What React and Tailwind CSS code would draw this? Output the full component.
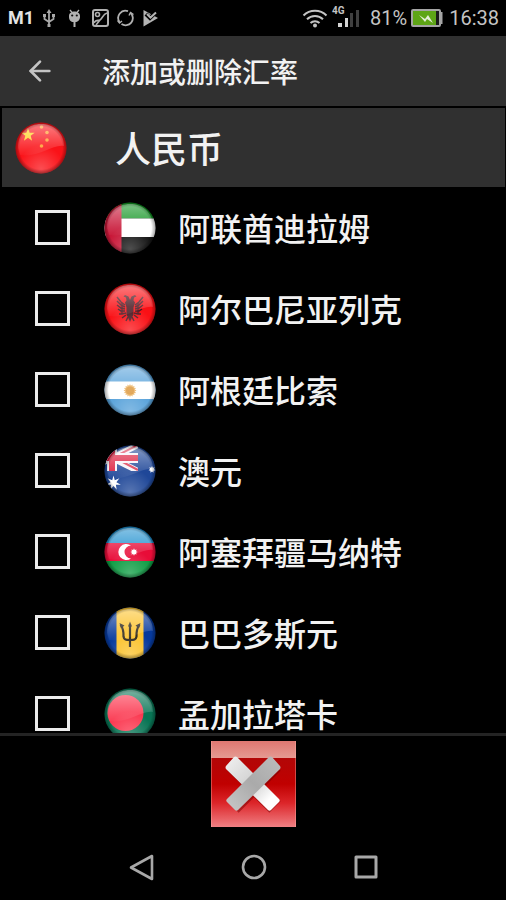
import { ArrowLeft } from 'lucide-react';
import { useId, useState } from 'react';

const CURRENCIES = [
  { code: 'AED', name: '阿联酋迪拉姆' },
  { code: 'ALL', name: '阿尔巴尼亚列克' },
  { code: 'ARS', name: '阿根廷比索' },
  { code: 'AUD', name: '澳元' },
  { code: 'AZN', name: '阿塞拜疆马纳特' },
  { code: 'BBD', name: '巴巴多斯元' },
  { code: 'BDT', name: '孟加拉塔卡' },
];

function starPoints(cx, cy, outer, inner, count) {
  const points = [];
  for (let i = 0; i < count * 2; i += 1) {
    const r = i % 2 === 0 ? outer : inner;
    const angle = (Math.PI * i) / count - Math.PI / 2;
    points.push(`${(cx + r * Math.cos(angle)).toFixed(2)},${(cy + r * Math.sin(angle)).toFixed(2)}`);
  }
  return points.join(' ');
}

// Flag artwork, drawn on a 52 x 52 square and clipped to a ball
const FLAGS = {
  CNY: (
    <>
      <rect width="52" height="52" fill="#fa1218" />
      <polygon points={starPoints(13, 13, 7, 2.8, 5)} fill="#ffd21f" />
      <circle cx="26.500" cy="5" r="1.800" fill="#ff9a2a" />
      <circle cx="32" cy="10.500" r="1.800" fill="#ff9a2a" />
      <circle cx="32" cy="18" r="1.800" fill="#ff9a2a" />
      <circle cx="26.500" cy="24" r="1.800" fill="#ff9a2a" />
    </>
  ),
  AED: (
    <>
      <rect width="52" height="16.500" fill="#0f9420" />
      <rect y="16.500" width="52" height="18.500" fill="#ffffff" />
      <rect y="35" width="52" height="17" fill="#141414" />
      <rect width="17.500" height="52" fill="#c81637" />
    </>
  ),
  ALL: (
    <>
      <rect width="52" height="52" fill="#fa1015" />
      <g fill="#4a1a22">
        <path d="M26 17l-1.500-3.500-3.500-1.500-1.500 1.500 2.500 1 .500 3-1.500 2 1.500 5v7l1.500 3L26 39l2-4.500 1.500-3v-7l1.500-5-1.500-2 .500-3 2.500-1-1.500-1.500-3.500 1.500z" />
      </g>
      <g fill="none" stroke="#4a1a22" strokeWidth="1.500">
        <path d="M21 22l-4-3-4-5M21 24l-4-2-4-4M21 26l-4-1-4-3M21 28l-4 0-3-2M22 30l-4 1-3 0M22 32l-4 3M24 34l-2 4" />
        <path d="M31 22l4-3 4-5M31 24l4-2 4-4M31 26l4-1 4-3M31 28l4 0 3-2M30 30l4 1 3 0M30 32l4 3M28 34l2 4" />
      </g>
      <path d="M18 20v11M34 20v11" stroke="#4a1a22" strokeWidth="2.500" strokeOpacity="0.700" />
    </>
  ),
  ARS: (
    <>
      <rect width="52" height="52" fill="#58a2da" />
      <rect y="17.500" width="52" height="17.500" fill="#ffffff" />
      <polygon points={starPoints(26, 26.5, 6.5, 4.8, 16)} fill="#ecb568" />
      <circle cx="26" cy="26.500" r="4" fill="#dd9a42" />
    </>
  ),
  AUD: (
    <>
      <rect width="52" height="52" fill="#1f4798" />
      <svg width="34" height="26" viewBox="0 0 34 26">
        <path d="M8 13 36-1M8 13l28 14M8 13-6 6M8 13-6 20" stroke="#f6f2f8" strokeWidth="6" />
        <path d="M8 13 34 0M12 13.500l22 11.500" stroke="#dc3650" strokeWidth="2" />
        <path d="M8 0v26M0 13h34" stroke="#f6f2f8" strokeWidth="10" />
        <path d="M8 0v26M0 13h34" stroke="#dc1c3c" strokeWidth="6" />
      </svg>
      <polygon points={starPoints(9.5, 38, 7.5, 3, 7)} fill="#ffffff" />
      <polygon points={starPoints(48, 24.5, 3.5, 2, 7)} fill="#ffffff" />
    </>
  ),
  AZN: (
    <>
      <rect width="52" height="17" fill="#2090cf" />
      <rect y="17" width="52" height="18" fill="#e80c38" />
      <rect y="35" width="52" height="17" fill="#0c9c42" />
      <path d="M27 19.500a8 8 0 1 0 0 13 6.500 6.500 0 1 1 0-13z" fill="#ffffff" />
      <polygon points={starPoints(30, 26, 3.7, 2.2, 8)} fill="#ffffff" />
    </>
  ),
  BBD: (
    <>
      <rect width="52" height="52" fill="#06399c" />
      <rect x="12.500" width="27" height="52" fill="#fcc22a" />
      <path
        d="M26 17v23M26 33c-4 0-6 0-6.500-3.500.300-5-1-9-3-12M26 33c4 0 6 0 6.500-3.500-.300-5 1-9 3-12"
        fill="none"
        stroke="#2a2318"
        strokeWidth="2.200"
      />
      <path d="m26 14.500 2 5h-4zM15.500 16l5 2.500-3.500 3zM36.500 16l-5 2.500 3.500 3z" fill="#2a2318" />
    </>
  ),
  BDT: (
    <>
      <rect width="52" height="52" fill="#087454" />
      <circle cx="21.500" cy="25" r="18" fill="#fb3850" />
    </>
  ),
};

function FlagBall({ code }) {
  const id = useId();

  return (
    <svg viewBox="0 0 52 52" className="h-[52px] w-[52px] shrink-0" aria-hidden="true">
      <defs>
        <clipPath id={`${id}-clip`}>
          <circle cx="26" cy="26" r="25.500" />
        </clipPath>
        <radialGradient id={`${id}-edge`}>
          <stop offset="0.820" stopColor="#000" stopOpacity="0" />
          <stop offset="1" stopColor="#000" stopOpacity="0.400" />
        </radialGradient>
        <linearGradient id={`${id}-shine`} x1="0" y1="0" x2="0" y2="1">
          <stop offset="0" stopColor="#fff" stopOpacity="0.450" />
          <stop offset="0.700" stopColor="#fff" stopOpacity="0.150" />
          <stop offset="1" stopColor="#fff" stopOpacity="0.030" />
        </linearGradient>
        <radialGradient id={`${id}-glow`} cx="0.5" cy="0.9" r="0.45">
          <stop offset="0" stopColor="#fff" stopOpacity="0.250" />
          <stop offset="1" stopColor="#fff" stopOpacity="0" />
        </radialGradient>
      </defs>
      <g clipPath={`url(#${id}-clip)`}>
        {FLAGS[code]}
        <path d="M3 26C3 10 14 2 26 2s23 8 23 22C37 22 25 36 5 33z" fill={`url(#${id}-shine)`} />
        <rect width="52" height="52" fill={`url(#${id}-glow)`} />
        <rect width="52" height="52" fill={`url(#${id}-edge)`} />
      </g>
    </svg>
  );
}

function StatusBar() {
  return (
    <div className="flex h-9 shrink-0 items-center justify-between pr-[7px] pl-2 font-[Roboto,sans-serif] text-xl text-[#c4c4c4]">
      <div className="flex items-center gap-2">
        <span className="text-lg font-bold text-[#e4e4e4]">M1</span>
        <svg viewBox="0 0 17 18" className="h-[18px] w-[17px]" fill="none" stroke="#a8a8a8" strokeWidth="1.8" aria-hidden="true">
          <path d="M7 2v15M2.500 6v4L7 13M11.500 6v4L7 13" />
          <path d="m7 0 2.500 4h-5zM1 5h3v3H1zM10 5h3v3h-3zM5.500 15h3v3h-3z" fill="#a8a8a8" stroke="none" />
        </svg>
        <svg viewBox="0 0 17 18" className="h-[18px] w-[17px]" fill="#b4b4b4" aria-hidden="true">
          <path d="m3 1 2.500 3M12 1 9.500 4" stroke="#b4b4b4" strokeWidth="1.300" />
          <path d="M2 7c0-6 11-6 11 0v1c0 3-2.500 5-4.500 5v5h-2v-5C4 13 2 11 2 8z" />
          <circle cx="5.200" cy="6.500" r="1.100" fill="#111" />
          <circle cx="9.800" cy="6.500" r="1.100" fill="#111" />
        </svg>
        <svg viewBox="0 0 17 18" className="h-[18px] w-[17px]" fill="none" stroke="#b0b0b0" strokeWidth="1.6" aria-hidden="true">
          <rect x="1" y="1" width="15" height="16" rx="2" strokeWidth="2" />
          <circle cx="5.500" cy="5.500" r="2" />
          <path d="M2 14c2-4 4-2 6-3s3-6 7-7M4 16l4-5" />
        </svg>
        <svg viewBox="0 0 17 18" className="h-[18px] w-[17px]" fill="none" stroke="#b0b0b0" strokeWidth="1.8" aria-hidden="true">
          <path d="M2.500 13A7.200 7.200 0 0 1 11 2.200M13.500 3.800a7.200 7.200 0 0 1-9 11.200" />
          <path d="M.500 11.500l2 2.500 2.500-2M16.500 5.500 13.500 3.500l-1.500 3" strokeWidth="1.400" />
        </svg>
        <svg viewBox="0 0 17 18" className="h-[18px] w-[17px]" aria-hidden="true">
          <path d="M1.500 1 16 9 1.500 17.500z" fill="#b4b4b4" />
          <path d="m4 5 4 4 7-7" stroke="#000" strokeWidth="4" fill="none" />
          <path d="m5 5 3.500 3.500L14 3.500" stroke="#b4b4b4" strokeWidth="2" fill="none" />
        </svg>
      </div>

      <div className="flex items-center">
        <svg viewBox="0 0 26 20" className="h-5 w-[26px]" fill="none" stroke="#c4c4c4" strokeWidth="2" aria-hidden="true">
          <path d="M1.500 7.500a16.500 16.500 0 0 1 23 0M5 11.300a11.500 11.500 0 0 1 16 0M8.500 15a6.600 6.600 0 0 1 9 0" />
          <circle cx="13" cy="17.500" r="2" fill="#c4c4c4" stroke="none" />
        </svg>
        <div className="relative ml-1 h-6 w-7">
          <span className="absolute top-0 left-0 text-[10px] leading-[10px] font-bold">4G</span>
          <svg viewBox="0 0 28 24" className="h-6 w-7" aria-hidden="true">
            <path d="M6 17h4v4H6zM13 12h3v9h-3z" fill="#d4d4d4" />
            <path d="M18 7h3v14h-3zM24 4h3v17h-3z" fill="#404040" />
          </svg>
        </div>
        <span className="ml-[10px]">81%</span>
        <svg viewBox="0 0 32 18" className="ml-1 h-[18px] w-8" aria-hidden="true">
          <rect x="1" y="1" width="28" height="16" rx="1" fill="#1c1c1c" stroke="#a5a5a5" strokeWidth="2" />
          <rect x="2" y="2" width="23" height="14" fill="#5ea516" />
          <path d="M29 3h2.500v12H29z" fill="#a5a5a5" />
          <path d="m8 6 6 4 3-4 5 8-6-4-2 3z" fill="#e4eed8" />
        </svg>
        <span className="ml-[6px]">16:38</span>
      </div>
    </div>
  );
}

function CloseIcon() {
  return (
    <svg viewBox="0 0 85 86" className="h-[86px] w-[85px]" aria-hidden="true">
      <defs>
        <linearGradient id="close-top" x1="0" y1="0" x2="0" y2="1">
          <stop offset="0" stopColor="#df7771" />
          <stop offset="1" stopColor="#e59a92" />
        </linearGradient>
        <linearGradient id="close-base" x1="0" y1="0" x2="0" y2="1">
          <stop offset="0" stopColor="#a90b0b" />
          <stop offset="0.500" stopColor="#c00000" />
          <stop offset="0.720" stopColor="#dc2529" />
          <stop offset="1" stopColor="#f08084" />
        </linearGradient>
        <linearGradient id="close-light" x1="0" y1="0" x2="1" y2="1">
          <stop offset="0" stopColor="#f2f2f2" />
          <stop offset="0.500" stopColor="#cfcfcf" />
          <stop offset="0.800" stopColor="#fff" />
        </linearGradient>
        <linearGradient id="close-dark" x1="1" y1="0" x2="0" y2="1">
          <stop offset="0" stopColor="#bcbcbc" />
          <stop offset="0.500" stopColor="#aaa" />
          <stop offset="1" stopColor="#c8c8c8" />
        </linearGradient>
      </defs>
      <rect width="85" height="86" fill="url(#close-base)" />
      <rect width="85" height="17" fill="url(#close-top)" />
      <path d="m22 24 42 42M64 24 22 66" stroke="#700" strokeOpacity="0.500" strokeWidth="16" />
      <path d="M26 16 68 58q1.500 1.500 0 3l-8 8q-1.500 1.500-3 0L15 28q-1-1.500 0-3l8-9q1.500-1 3 0z" fill="url(#close-light)" />
      <path d="M58 16 16 58q-1.500 1.500 0 3l8 8q1.500 1.500 3 0L69 28q1-1.500 0-3l-8-9q-1.500-1-3 0z" fill="url(#close-dark)" />
      <path d="M.500 0v86M84.500 0v86" stroke="#ffb0a8" strokeOpacity="0.400" />
    </svg>
  );
}

export default function App() {
  const [selected, setSelected] = useState([]);

  const toggle = (code) => {
    setSelected((prev) => (prev.includes(code) ? prev.filter((item) => item !== code) : [...prev, code]));
  };

  return (
    <div className="flex h-screen flex-col bg-black font-['Noto_Sans_CJK_SC',sans-serif] text-[#f2f2f2]">
      <StatusBar />

      <header className="flex h-[70px] shrink-0 items-center bg-[#303030] pl-6">
        <button type="button" aria-label="返回" className="mr-[46px]">
          <ArrowLeft className="h-8 w-8 text-[#c4c4c4]" strokeWidth={2} />
        </button>
        <h1 className="text-[28px] leading-10 font-medium">添加或删除汇率</h1>
      </header>

      <main className="flex min-h-0 flex-1 flex-col">
        <div className="mt-[2px] mr-px ml-[2px] flex h-[79px] shrink-0 items-center bg-[#303030] pl-[13px]">
          <FlagBall code="CNY" />
          <h2 className="ml-12 pb-[2px] text-4xl leading-10 font-medium">人民币</h2>
        </div>

        <ul className="min-h-0 flex-1 overflow-y-auto [scrollbar-width:none]">
          {CURRENCIES.map((currency) => (
            <li key={currency.code}>
              <label className="flex h-[81px] items-center pl-[35px]">
                <input
                  type="checkbox"
                  checked={selected.includes(currency.code)}
                  onChange={() => toggle(currency.code)}
                  className="mr-[34px] h-[35px] w-[35px] shrink-0 appearance-none border-[3px] border-[#ececec] checked:bg-[#5ea516]"
                />
                <FlagBall code={currency.code} />
                <span className="ml-[22px] pb-[2px] text-[32px] leading-10 font-medium">{currency.name}</span>
              </label>
            </li>
          ))}
        </ul>
      </main>

      <footer className="shrink-0 border-t-[3px] border-[#242424] pt-[5px]">
        <button type="button" aria-label="关闭" className="mx-auto block">
          <CloseIcon />
        </button>
        <nav className="flex justify-center gap-[84px] pt-[26px] pb-[19px] pl-[2px]">
          <button type="button" aria-label="后退">
            <svg viewBox="0 0 28 28" className="h-7 w-7" fill="none" stroke="#a8a8a8" strokeWidth="2.600" strokeLinejoin="round" aria-hidden="true">
              <path d="M24 3v23L3 14.500z" />
            </svg>
          </button>
          <button type="button" aria-label="主屏幕">
            <svg viewBox="0 0 28 28" className="h-7 w-7" fill="none" stroke="#a8a8a8" strokeWidth="2.600" aria-hidden="true">
              <circle cx="14" cy="14" r="11" />
            </svg>
          </button>
          <button type="button" aria-label="最近任务">
            <svg viewBox="0 0 28 28" className="h-7 w-7" fill="none" stroke="#a8a8a8" strokeWidth="3" strokeLinejoin="round" aria-hidden="true">
              <rect x="4" y="4" width="20" height="20" />
            </svg>
          </button>
        </nav>
      </footer>
    </div>
  );
}
